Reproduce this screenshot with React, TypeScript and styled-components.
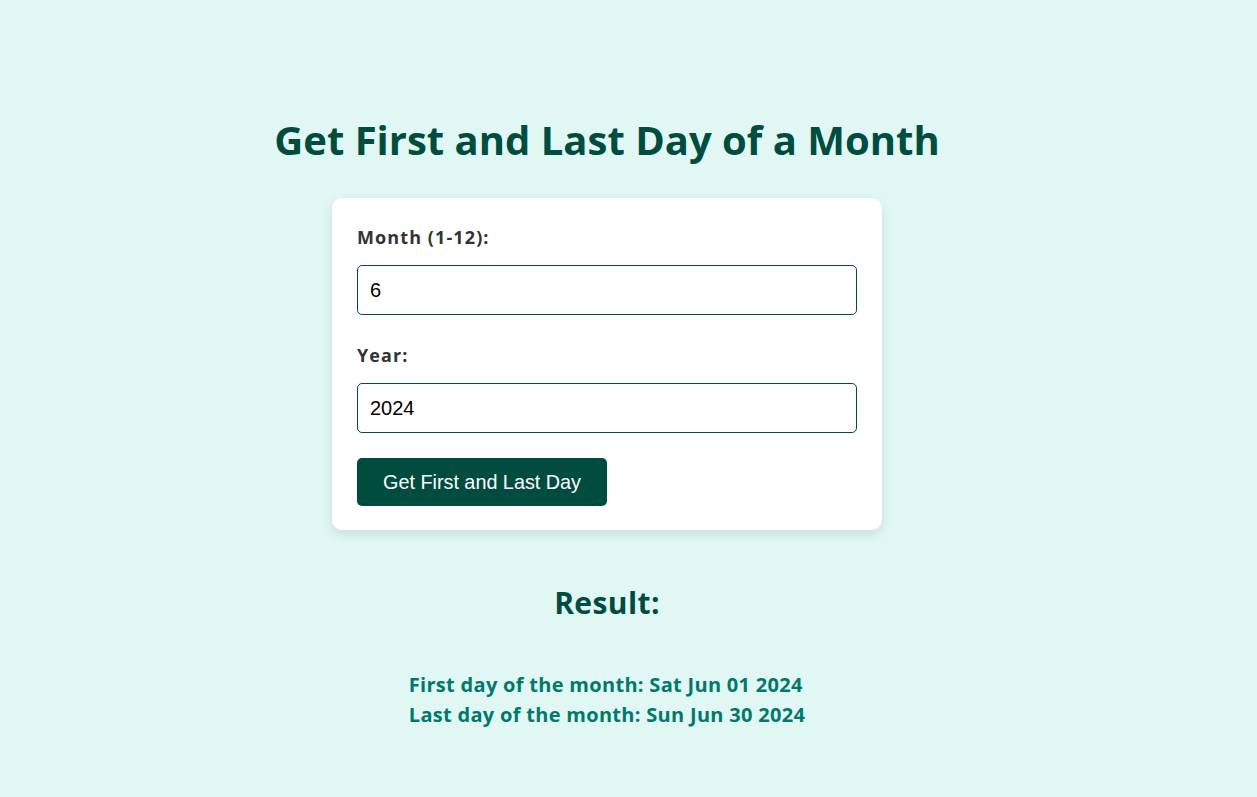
import React, { useState, useCallback } from 'react';
import styled, { createGlobalStyle } from 'styled-components';

const GlobalStyle = createGlobalStyle`
  html, body {
    margin: 0;
    padding: 0;
    background: #e0f7f4;
  }
  body {
    font-family: "Open Sans", "Liberation Sans", sans-serif;
  }
`;

const Page = styled.main`
  min-height: 100vh;
  box-sizing: border-box;
  padding: 110px 43px 40px 0;
  display: flex;
  flex-direction: column;
  align-items: center;
`;

const Title = styled.h1`
  margin: 0 0 28px;
  font-size: 40px;
  line-height: 60px;
  font-weight: 700;
  color: #004d40;
`;

const Card = styled.form`
  width: 550px;
  box-sizing: border-box;
  padding: 25px 25px 24px;
  background: #ffffff;
  border-radius: 10px;
  box-shadow: 0 4px 12px rgba(0, 0, 0, 0.1);
  display: flex;
  flex-direction: column;
  align-items: flex-start;
`;

const Label = styled.label`
  display: block;
  margin: 1px 0 14px;
  font-size: 18px;
  line-height: 27px;
  font-weight: 700;
  letter-spacing: 1.1px;
  color: #333333;
`;

const Input = styled.input<{ $gap: number }>`
  display: block;
  width: 100%;
  box-sizing: border-box;
  height: 50px;
  margin: 0 0 ${(p) => p.$gap}px;
  padding: 12px;
  border: 1px solid #004d40;
  border-radius: 5px;
  font-family: "Liberation Sans", Arial, sans-serif;
  font-size: 20px;
  line-height: 24px;
  color: #000000;
  outline: none;
`;

const Button = styled.button`
  width: 250px;
  height: 48px;
  padding: 0;
  border: none;
  border-radius: 5px;
  background: #004d40;
  color: #ffffff;
  font-family: "Liberation Sans", Arial, sans-serif;
  font-size: 19.8px;
  line-height: 24px;
  white-space: nowrap;
  cursor: pointer;
`;

const ResultTitle = styled.h2`
  margin: 50px 0 45px;
  font-size: 30px;
  line-height: 45px;
  font-weight: 700;
  letter-spacing: 0.4px;
  color: #004d40;
`;

const ResultList = styled.div`
  width: fit-content;
  text-align: left;
`;

const ResultLine = styled.p`
  margin: 0;
  font-size: 20px;
  line-height: 30px;
  font-weight: 700;
  letter-spacing: 0.3px;
  color: #00796b;
`;

const fmt = (d: Date) => d.toDateString();

const App = () => {
  const [month, setMonth] = useState('6');
  const [year, setYear] = useState('2024');
  const [range, setRange] = useState<{ first: Date; last: Date }>({
    first: new Date(2024, 5, 1),
    last: new Date(2024, 6, 0),
  });

  const calc = useCallback(
    (e: React.FormEvent) => {
      e.preventDefault();
      const m = parseInt(month, 10);
      const y = parseInt(year, 10);
      if (!m || !y || m < 1 || m > 12) return;
      setRange({ first: new Date(y, m - 1, 1), last: new Date(y, m, 0) });
    },
    [month, year]
  );

  return (
    <>
      <GlobalStyle />
      <Page>
        <Title>Get First and Last Day of a Month</Title>
        <Card onSubmit={calc}>
          <Label htmlFor="month">Month (1-12):</Label>
          <Input id="month" type="number" $gap={26} value={month} onChange={(e) => setMonth(e.target.value)} />
          <Label htmlFor="year">Year:</Label>
          <Input id="year" type="number" $gap={25} value={year} onChange={(e) => setYear(e.target.value)} />
          <Button type="submit">Get First and Last Day</Button>
        </Card>
        <ResultTitle>Result:</ResultTitle>
        <ResultList>
          <ResultLine>First day of the month: {fmt(range.first)}</ResultLine>
          <ResultLine>Last day of the month: {fmt(range.last)}</ResultLine>
        </ResultList>
      </Page>
    </>
  );
};

export default App;
